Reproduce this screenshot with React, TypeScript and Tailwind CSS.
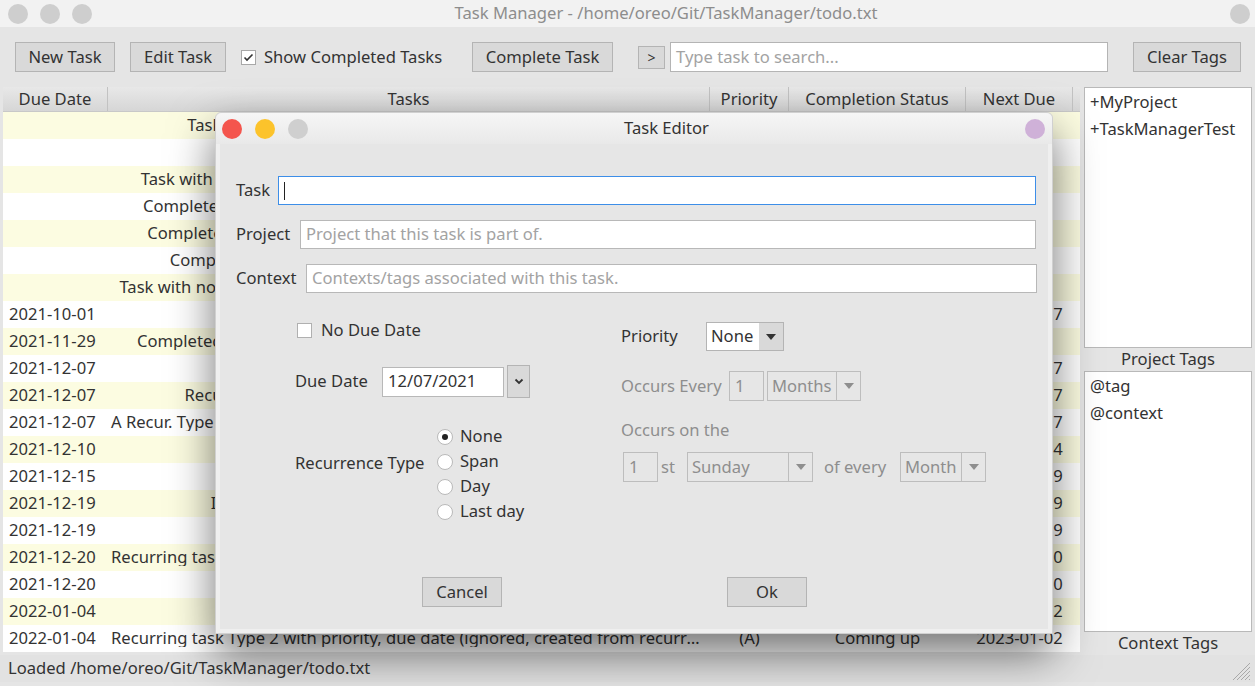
import React from 'react';

type Row = { d: string; t: string; p: string; s: string; n: string };

const rows: Row[] = [
  { d: '', t: 'Task with a priority, a project and a context in +MyProject', p: '(B)', s: 'Not Completed', n: '' },
  { d: '', t: 'Simple task with a tag @tag', p: '', s: 'Not Completed', n: '' },
  { d: '', t: 'Task with project and context tags +TaskManagerTest @context @tag', p: '', s: 'Not Completed', n: '' },
  { d: '', t: 'Completed task with priority, creation date and completion date @ta', p: '(C)', s: 'Completed', n: '' },
  { d: '', t: 'Completed task with a creation date and completion date @context', p: '', s: 'Completed', n: '' },
  { d: '', t: 'Completed task with only a completion date +MyProject @tag', p: '', s: 'Completed', n: '' },
  { d: '', t: 'Task with no priority, no dates and nothing else but the project +MyProject', p: '', s: 'Not Completed', n: '' },
  { d: '2021-10-01', t: 'Task with a due date +MyProject', p: '', s: 'Overdue', n: '2022-10-07' },
  { d: '2021-11-29', t: 'Completed task with a due date and a completion date +TaskManager', p: '', s: 'Completed', n: '' },
  { d: '2021-12-07', t: 'Recurring task Type 1', p: '', s: 'Overdue', n: '2022-12-07' },
  { d: '2021-12-07', t: 'Recurring task Type 1 with a span of one year rec:1y @tag', p: '', s: 'Overdue', n: '2022-12-07' },
  { d: '2021-12-07', t: 'A Recur. Type 3 task that happens on the last day of every single month of the year', p: '', s: 'Overdue', n: '2022-12-07' },
  { d: '2021-12-10', t: 'Another recurring task', p: '', s: 'Overdue', n: '2022-12-14' },
  { d: '2021-12-15', t: 'Recurring task Type 2', p: '', s: 'Overdue', n: '2022-12-19' },
  { d: '2021-12-19', t: 'Important task that is due in a couple of days @tag', p: '(B)', s: 'Overdue', n: '2022-12-19' },
  { d: '2021-12-19', t: 'Recurring task Type 1', p: '', s: 'Overdue', n: '2022-12-19' },
  { d: '2021-12-20', t: 'Recurring task Type 3 with priority, due date, a project and a context @context @tag +MyProject', p: '(A)', s: 'Overdue', n: '2022-12-20' },
  { d: '2021-12-20', t: 'Recurring task Type 1', p: '', s: 'Overdue', n: '2022-12-20' },
  { d: '2022-01-04', t: 'Recurring task Type 2', p: '', s: 'Coming up', n: '2023-01-02' },
  { d: '2022-01-04', t: 'Recurring task Type 2 with priority, due date (ignored, created from recurrence rule)', p: '(A)', s: 'Coming up', n: '2023-01-02' },
];

function Btn({ children, w }: { children: React.ReactNode; w: string }) {
  return (
    <div className={`${w} h-[30px] flex items-center justify-center bg-[#d9d9d9] border border-[#b4b4b4] text-[#333]`}>
      {children}
    </div>
  );
}

function Arrow({ color }: { color: string }) {
  return (
    <svg width="10" height="6" viewBox="0 0 10 6">
      <path d="M0 0 L10 0 L5 6 Z" fill={color} />
    </svg>
  );
}

function DisabledCombo({ text, w, tw }: { text: string; w: string; tw: string }) {
  return (
    <div className={`${w} h-[30px] flex border border-[#bdbdbd] bg-[#e6e6e6] text-[#8e8e8e]`}>
      <div className={`${tw} h-full flex items-center pl-[4px] border-r border-[#bdbdbd]`}>{text}</div>
      <div className="flex-1 flex items-center justify-center">
        <Arrow color="#8e8e8e" />
      </div>
    </div>
  );
}

function Radio({ checked, label }: { checked?: boolean; label: string }) {
  return (
    <div className="h-[25px] flex items-center">
      <div className="w-[16px] h-[16px] rounded-full bg-white border border-[#b9b9b9] flex items-center justify-center">
        {checked && <div className="w-[6px] h-[6px] rounded-full bg-[#222]" />}
      </div>
      <span className="ml-[7px]">{label}</span>
    </div>
  );
}

export default function App() {
  return (
    <div className="relative w-[1255px] h-[686px] overflow-hidden bg-[#e5e5e5] font-['Noto_Sans',sans-serif] text-[16.6px] text-[#333] leading-none">
      {/* Title bar */}
      <div className="h-[27px] bg-[#f2f2f2] flex items-center px-[8px]">
        <div className="flex gap-[12px]">
          <div className="w-[20px] h-[20px] rounded-full bg-[#cecece]" />
          <div className="w-[20px] h-[20px] rounded-full bg-[#cecece]" />
          <div className="w-[20px] h-[20px] rounded-full bg-[#cecece]" />
        </div>
        <div className="flex-1 text-center text-[#8d8d8d] pl-[10px]">Task Manager - /home/oreo/Git/TaskManager/todo.txt</div>
        <div className="w-[20px] h-[20px] rounded-full bg-[#cecece] -mr-[3px]" />
      </div>

      {/* Toolbar */}
      <div className="h-[60px] flex items-start pt-[15px] pl-[15px]">
        <Btn w="w-[100px]">New Task</Btn>
        <div className="ml-[15px]"><Btn w="w-[96px]">Edit Task</Btn></div>
        <div className="ml-[15px] h-[30px] flex items-center">
          <div className="w-[15px] h-[15px] bg-white border border-[#a8a8a8] flex items-center justify-center">
            <svg width="11" height="9" viewBox="0 0 11 9">
              <path d="M1.5 4.5 L4 7 L9.5 1.5" fill="none" stroke="#333" strokeWidth="1.6" />
            </svg>
          </div>
          <span className="ml-[8px] w-[180px] whitespace-nowrap">Show Completed Tasks</span>
        </div>
        <div className="ml-[28px]"><Btn w="w-[141px]">Complete Task</Btn></div>
        <div className="ml-[25px] mt-[4px] w-[27px] h-[23px] flex items-center justify-center bg-[#d9d9d9] border border-[#b4b4b4] text-[14px]">&gt;</div>
        <div className="ml-[5px] w-[438px] h-[30px] bg-white border border-[#b4b4b4] flex items-center pl-[5px] text-[#a3a3a3]">Type task to search...</div>
        <div className="ml-[25px]"><Btn w="w-[108px]">Clear Tags</Btn></div>
      </div>

      {/* Main */}
      <div className="flex pl-[3px] h-[568px]">
        <div className="w-[1077px] flex flex-col">
          <div className="h-[25px] flex bg-linear-to-b from-[#e8e8e8] to-[#d6d6d6] border-b border-[#c8c8c8]">
            <div className="w-[105px] flex items-center justify-center border-r border-[#c2c2c2]">Due Date</div>
            <div className="w-[602px] flex items-center justify-center border-r border-[#c2c2c2]">Tasks</div>
            <div className="w-[79px] flex items-center justify-center border-r border-[#c2c2c2]">Priority</div>
            <div className="w-[177px] flex items-center justify-center border-r border-[#c2c2c2]">Completion Status</div>
            <div className="w-[107px] flex items-center justify-center border-r border-[#c2c2c2]">Next Due</div>
            <div className="flex-1" />
          </div>
          {rows.map((r, i) => (
            <div key={i} className={`h-[27px] flex items-center ${i % 2 === 0 ? 'bg-[#fcfce1]' : 'bg-white'}`}>
              <div className="w-[105px] pl-[6px] whitespace-nowrap">{r.d}</div>
              <div className="w-[602px] px-[3px] text-center whitespace-nowrap overflow-hidden text-ellipsis">{r.t}</div>
              <div className="w-[79px] text-center whitespace-nowrap">{r.p}</div>
              <div className="w-[177px] text-center whitespace-nowrap">{r.s}</div>
              <div className="w-[107px] text-center whitespace-nowrap">{r.n}</div>
            </div>
          ))}
        </div>
        <div className="ml-[4px] w-[168px] flex flex-col">
          <div className="h-[261px] bg-white border border-[#b9b9b9] pl-[5px] pt-[1px]">
            <div className="h-[27px] flex items-center">+MyProject</div>
            <div className="h-[27px] flex items-center">+TaskManagerTest</div>
          </div>
          <div className="h-[23px] flex items-center justify-center">Project Tags</div>
          <div className="h-[261px] bg-white border border-[#b9b9b9] pl-[5px] pt-[1px]">
            <div className="h-[27px] flex items-center">@tag</div>
            <div className="h-[27px] flex items-center">@context</div>
          </div>
          <div className="h-[23px] flex items-center justify-center">Context Tags</div>
        </div>
      </div>

      {/* Status bar */}
      <div className="h-[27px] flex items-center pl-[8px] bg-[#e2e2e2]">
        <span>Loaded /home/oreo/Git/TaskManager/todo.txt</span>
        <div className="flex-1" />
        <svg width="24" height="24" viewBox="0 0 24 24" className="mr-[4px]">
          {[6, 10, 14, 18, 22].map((k) => (
            <line key={k} x1={k} y1={23} x2={23} y2={k} stroke="#a8a8a8" strokeWidth="1" />
          ))}
        </svg>
      </div>

      {/* Dialog */}
      <div className="absolute left-[215px] top-[112px] w-[838px] h-[522px] bg-[#efefef] rounded-t-[6px] shadow-[0_20px_45px_rgba(0,0,0,0.55)] flex flex-col border border-[#d0d0d0]">
        <div className="h-[31px] flex items-center pl-[6px] pr-[7px] rounded-t-[6px] bg-linear-to-b from-[#f6f6f6] to-[#e9e9e9]">
          <div className="flex gap-[13px]">
            <div className="w-[20px] h-[20px] rounded-full bg-[#f4554d]" />
            <div className="w-[20px] h-[20px] rounded-full bg-[#fcc32b]" />
            <div className="w-[20px] h-[20px] rounded-full bg-[#cfcfcf]" />
          </div>
          <div className="flex-1 text-center">Task Editor</div>
          <div className="w-[20px] h-[20px] rounded-full bg-[#cfb1d8]" />
        </div>
        <div className="flex-1 mx-[4px] mb-[4px] bg-[#e6e6e6] flex flex-col">
          {/* Top fields */}
          <div className="pt-[32px] pl-[16px] pr-[12px] flex flex-col gap-[15px]">
            <div className="h-[29px] flex items-center">
              <span className="w-[42px]">Task</span>
              <div className="flex-1 h-[29px] bg-white border border-[#3d8ee8] flex items-center pl-[5px]">
                <div className="w-[1px] h-[18px] bg-[#222]" />
              </div>
            </div>
            <div className="h-[29px] flex items-center">
              <span className="w-[64px]">Project</span>
              <div className="flex-1 h-[29px] bg-white border border-[#b8b8b8] flex items-center pl-[5px] text-[#a3a3a3]">Project that this task is part of.</div>
            </div>
            <div className="h-[29px] flex items-center">
              <span className="w-[70px]">Context</span>
              <div className="flex-1 h-[29px] bg-white border border-[#b8b8b8] flex items-center pl-[5px] text-[#a3a3a3] mr-[-1px]">Contexts/tags associated with this task.</div>
            </div>
          </div>

          {/* Lower section */}
          <div className="mt-[22px] pl-[75px] flex">
            <div className="w-[326px] flex flex-col">
              <div className="h-[30px] flex items-center pl-[2px]">
                <div className="w-[15px] h-[15px] bg-white border border-[#b0b0b0]" />
                <span className="ml-[9px]">No Due Date</span>
              </div>
              <div className="mt-[20px] h-[33px] flex items-center">
                <span className="w-[87px]">Due Date</span>
                <div className="w-[122px] h-[30px] bg-white border border-[#b8b8b8] flex items-center pl-[5px]">12/07/2021</div>
                <div className="ml-[3px] w-[23px] h-[33px] bg-[#d9d9d9] border border-[#b4b4b4] flex items-center justify-center">
                  <svg width="10" height="7" viewBox="0 0 10 7">
                    <path d="M1.5 1.5 L5 5 L8.5 1.5" fill="none" stroke="#333" strokeWidth="1.8" />
                  </svg>
                </div>
              </div>
              <div className="mt-[26px] flex">
                <span className="w-[142px] mt-[31px]">Recurrence Type</span>
                <div className="flex flex-col">
                  <Radio checked label="None" />
                  <Radio label="Span" />
                  <Radio label="Day" />
                  <Radio label="Last day" />
                </div>
              </div>
            </div>
            <div className="flex flex-col">
              <div className="mt-[7px] h-[29px] flex items-center">
                <span className="w-[85px]">Priority</span>
                <div className="w-[78px] h-[29px] flex border border-[#b4b4b4]">
                  <div className="w-[52px] bg-white flex items-center pl-[4px]">None</div>
                  <div className="flex-1 bg-[#d9d9d9] flex items-center justify-center">
                    <Arrow color="#333" />
                  </div>
                </div>
              </div>
              <div className="mt-[20px] h-[30px] flex items-center text-[#8e8e8e]">
                <span className="w-[108px]">Occurs Every</span>
                <div className="w-[35px] h-[30px] border border-[#bdbdbd] flex items-center pl-[5px]">1</div>
                <div className="ml-[3px]"><DisabledCombo text="Months" w="w-[94px]" tw="w-[69px]" /></div>
              </div>
              <div className="mt-[17px] h-[24px] flex items-center text-[#8e8e8e]">Occurs on the</div>
              <div className="mt-[10px] h-[30px] flex items-center text-[#8e8e8e] pl-[2px]">
                <div className="w-[35px] h-[30px] border border-[#bdbdbd] flex items-center pl-[5px]">1</div>
                <span className="ml-[3px] w-[26px]">st</span>
                <DisabledCombo text="Sunday" w="w-[126px]" tw="w-[101px]" />
                <span className="ml-[11px] w-[76px]">of every</span>
                <DisabledCombo text="Month" w="w-[86px]" tw="w-[61px]" />
              </div>
            </div>
          </div>

          {/* Buttons */}
          <div className="mt-[53px] pl-[202px] flex gap-[225px]">
            <Btn w="w-[80px]">Cancel</Btn>
            <Btn w="w-[80px]">Ok</Btn>
          </div>
        </div>
      </div>
    </div>
  );
}
